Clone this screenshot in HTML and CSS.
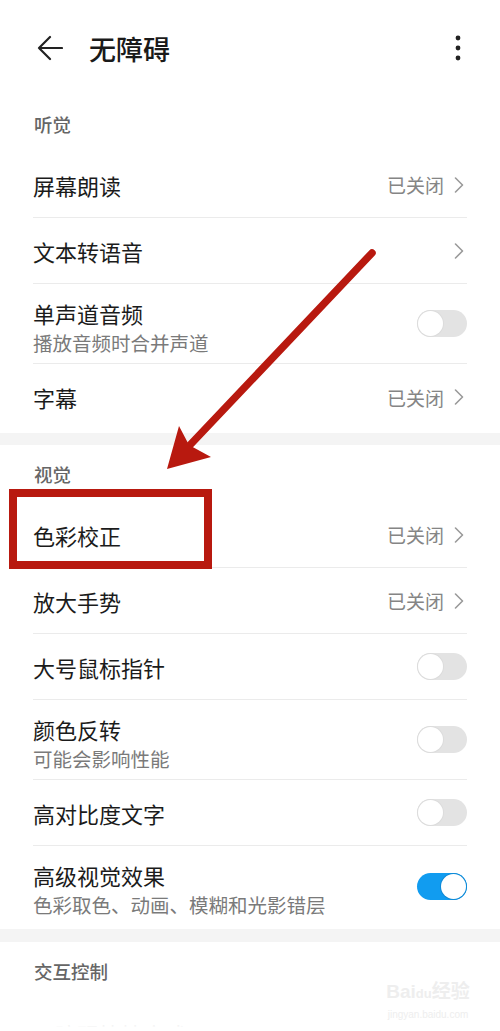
FILE: index.html
```html
<!DOCTYPE html>
<html lang="zh-CN">
<head>
    <meta charset="UTF-8">
    <meta name="viewport" content="width=device-width, initial-scale=1.0">
    <title>无障碍</title>
    <link rel="stylesheet" href="styles.css">
</head>
<body>
    <div class="page">
        <header class="appbar">
            <svg class="back-icon" viewBox="0 0 26 26">
                <path d="M25 13H2M13 2L2 13l11 11"/>
            </svg>
            <h1 class="appbar-title">无障碍</h1>
            <svg class="more-icon" viewBox="0 0 6 26">
                <circle cx="3" cy="3" r="2.4"/>
                <circle cx="3" cy="13" r="2.4"/>
                <circle cx="3" cy="23" r="2.4"/>
            </svg>
        </header>

        <!-- 听觉 -->
        <section class="group">
            <div class="group-title">听觉</div>
            <div class="row">
                <div class="row-text"><div class="row-title">屏幕朗读</div></div>
                <div class="row-value">已关闭<svg class="chevron" viewBox="0 0 10 16"><path d="M1.5 1l7 7-7 7"/></svg></div>
            </div>
            <div class="row">
                <div class="row-text"><div class="row-title">文本转语音</div></div>
                <div class="row-value"><svg class="chevron" viewBox="0 0 10 16"><path d="M1.5 1l7 7-7 7"/></svg></div>
            </div>
            <div class="row row-tall">
                <div class="row-text">
                    <div class="row-title">单声道音频</div>
                    <div class="row-sub">播放音频时合并声道</div>
                </div>
                <div class="switch"><span class="knob"></span></div>
            </div>
            <div class="row row-last">
                <div class="row-text"><div class="row-title">字幕</div></div>
                <div class="row-value">已关闭<svg class="chevron" viewBox="0 0 10 16"><path d="M1.5 1l7 7-7 7"/></svg></div>
            </div>
        </section>

        <div class="band"></div>

        <!-- 视觉 -->
        <section class="group">
            <div class="group-title">视觉</div>
            <div class="row">
                <div class="row-text"><div class="row-title">色彩校正</div></div>
                <div class="row-value">已关闭<svg class="chevron" viewBox="0 0 10 16"><path d="M1.5 1l7 7-7 7"/></svg></div>
            </div>
            <div class="row">
                <div class="row-text"><div class="row-title">放大手势</div></div>
                <div class="row-value">已关闭<svg class="chevron" viewBox="0 0 10 16"><path d="M1.5 1l7 7-7 7"/></svg></div>
            </div>
            <div class="row">
                <div class="row-text"><div class="row-title">大号鼠标指针</div></div>
                <div class="switch"><span class="knob"></span></div>
            </div>
            <div class="row row-tall">
                <div class="row-text">
                    <div class="row-title">颜色反转</div>
                    <div class="row-sub">可能会影响性能</div>
                </div>
                <div class="switch"><span class="knob"></span></div>
            </div>
            <div class="row">
                <div class="row-text"><div class="row-title">高对比度文字</div></div>
                <div class="switch"><span class="knob"></span></div>
            </div>
            <div class="row row-tall row-last">
                <div class="row-text">
                    <div class="row-title">高级视觉效果</div>
                    <div class="row-sub">色彩取色、动画、模糊和光影错层</div>
                </div>
                <div class="switch switch-on"><span class="knob"></span></div>
            </div>
        </section>

        <div class="band band-2"></div>

        <!-- 交互控制 -->
        <section class="group">
            <div class="group-title">交互控制</div>
            <div class="row row-partial">
                <div class="row-text"><div class="row-title">无障碍快捷方式</div></div>
            </div>
        </section>

        <!-- bottom edge of the capture fades out -->
        <div class="bottom-fade"></div>

        <!-- annotations drawn over the screenshot -->
        <svg class="annot-arrow" viewBox="0 0 500 1031">
            <line x1="372" y1="253" x2="190" y2="445"/>
            <polygon points="167,469 179,426 189,445 211,457"/>
        </svg>
        <div class="annot-box"></div>

        <div class="watermark">
            <div class="wm-logo">Bai<span class="wm-paw">du</span>经验</div>
            <div class="wm-url">jingyan.baidu.com</div>
        </div>
    </div>
</body>
</html>
```

FILE: styles.css
```css
* {
    margin: 0;
    padding: 0;
    box-sizing: border-box;
}

html, body {
    width: 500px;
    height: 1031px;
    overflow: hidden;
}

body {
    font-family: 'Noto Sans CJK SC', 'Noto Sans', sans-serif;
    background: #fff;
    color: #1b1b1b;
}

.page {
    position: relative;
    width: 500px;
    height: 1031px;
    overflow: hidden;
    background: #fff;
}

/* top bar */
.appbar {
    height: 95px;
    display: flex;
    align-items: center;
    padding: 0 39px 0 37px;
}

.back-icon {
    width: 26px;
    height: 26px;
    fill: none;
    stroke: #222;
    stroke-width: 2.2;
    stroke-linecap: round;
    stroke-linejoin: round;
}

.appbar-title {
    flex: 1;
    margin-left: 26px;
    font-size: 27px;
    font-weight: 500;
    color: #1a1a1a;
    line-height: 1;
    margin-top: 1px;
}

.more-icon {
    width: 6px;
    height: 26px;
    fill: #222;
}

/* list groups */
.group {
    padding-bottom: 3px;
}

.group-title {
    height: 57px;
    display: flex;
    align-items: center;
    padding-left: 34px;
    font-size: 18.5px;
    font-weight: 500;
    color: #666;
}

.row {
    margin: 0 33px;
    height: 66px;
    display: flex;
    align-items: center;
    justify-content: space-between;
    border-bottom: 1px solid #ebebeb;
}

.row-tall {
    height: 80px;
}

.row-tall .row-text {
    padding-top: 6px;
}

.row-last {
    border-bottom: none;
}

.row-partial {
    align-items: flex-start;
    padding-top: 20px;
}

.row-title {
    font-size: 22px;
    line-height: 30px;
    color: #1b1b1b;
}

.row-sub {
    font-size: 19.5px;
    line-height: 26px;
    margin-top: 2px;
    color: #7a7a7a;
}

.row-value {
    display: flex;
    align-items: center;
    font-size: 19px;
    color: #858585;
}

.chevron {
    width: 10px;
    height: 16px;
    margin-left: 10px;
    margin-right: 3px;
    fill: none;
    stroke: #9a9a9a;
    stroke-width: 1.6;
    stroke-linecap: round;
    stroke-linejoin: round;
}

/* switches */
.switch {
    position: relative;
    width: 50px;
    height: 27px;
    border-radius: 14px;
    background: #e3e3e3;
}

.switch .knob {
    position: absolute;
    top: 1px;
    left: 1px;
    width: 25px;
    height: 25px;
    border-radius: 50%;
    background: #fff;
    box-shadow: 0 0 0 1px #dcdcdc;
}

.switch-on {
    background: #119cf0;
}

.switch-on .knob {
    left: 24px;
    box-shadow: 0 0 0 1px #0f8ad6;
}

/* section separator */
.band {
    height: 12px;
    background: #f4f4f4;
}

.band-2 {
    height: 13px;
}

.bottom-fade {
    position: absolute;
    left: 0;
    bottom: 0;
    width: 500px;
    height: 10px;
    background: linear-gradient(rgba(255, 255, 255, 0.6), #fff 60%);
}

/* screenshot annotations */
.annot-arrow {
    position: absolute;
    top: 0;
    left: 0;
    width: 500px;
    height: 1031px;
    pointer-events: none;
}

.annot-arrow line {
    stroke: #b8190f;
    stroke-width: 7.5;
    stroke-linecap: round;
}

.annot-arrow polygon {
    fill: #b8190f;
}

.annot-box {
    position: absolute;
    left: 9px;
    top: 489px;
    width: 203px;
    height: 80px;
    border: 8px solid #b8190f;
}

.watermark {
    position: absolute;
    left: 383px;
    top: 980px;
    width: 90px;
    text-align: center;
    color: #eeeeee;
    font-family: 'Liberation Sans', 'Noto Sans CJK SC', sans-serif;
    pointer-events: none;
}

.wm-logo {
    font-size: 19px;
    font-weight: 700;
    line-height: 24px;
    white-space: nowrap;
}

.wm-paw {
    font-size: 13px;
}

.wm-url {
    font-size: 10px;
    line-height: 14px;
    margin-top: 2px;
}
```
